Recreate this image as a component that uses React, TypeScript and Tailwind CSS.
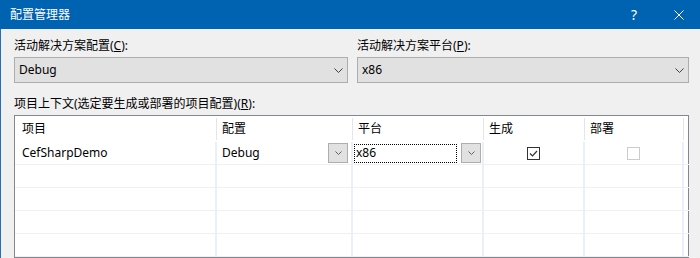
const Chevron = ({ small = false }: { small?: boolean }) =>
  small ? (
    <svg width="7" height="4" viewBox="0 0 7 4" className="block">
      <polyline points="0.5,0.5 3.5,3.5 6.5,0.5" fill="none" stroke="#606060" strokeWidth="1" />
    </svg>
  ) : (
    <svg width="9" height="5" viewBox="0 0 9 5" className="block">
      <polyline points="0.5,0.5 4.5,4.5 8.5,0.5" fill="none" stroke="#404040" strokeWidth="1" />
    </svg>
  );

const Combo = ({ value }: { value: string }) => (
  <div className="h-[26px] flex items-center justify-between bg-[#e1e1e1] border border-[#adadad] pl-[4px] pr-[4px]">
    <span>{value}</span>
    <Chevron />
  </div>
);

const SmallButton = () => (
  <div className="w-[20px] h-[20px] flex items-center justify-center bg-[#e1e1e1] border border-[#adadad]">
    <Chevron small />
  </div>
);

const headers = ["项目", "配置", "平台", "生成", "部署", ""];

const App = () => {
  return (
    <div className="w-[700px] h-[258px] overflow-hidden bg-[#f0f0f0] text-[12px] leading-[16px] text-black font-[family-name:'Noto_Sans','Noto_Sans_CJK_SC',sans-serif] flex flex-col">
      {/* Title bar */}
      <div className="h-[29px] bg-[#0063b1] text-white flex items-center pl-[10px] shrink-0">
        <span className="grow">配置管理器</span>
        <span className="w-[10px] text-[14px] text-center mr-[35px]">?</span>
        <svg width="10" height="10" viewBox="0 0 10 10" className="mr-[16px]">
          <path d="M0.5 0.5 L9.5 9.5 M9.5 0.5 L0.5 9.5" stroke="white" strokeWidth="1" />
        </svg>
      </div>

      {/* Body */}
      <div className="grow border-l border-[#2a6db5] pl-[13px] pr-[11px] pt-[9px]">
        <div className="flex gap-[9px]">
          <div className="w-[334px] flex flex-col gap-[3px]">
            <span>活动解决方案配置(<u>C</u>):</span>
            <Combo value="Debug" />
          </div>
          <div className="grow flex flex-col gap-[3px]">
            <span>活动解决方案平台(<u>P</u>):</span>
            <Combo value="x86" />
          </div>
        </div>

        <div className="mt-[13px]">项目上下文(选定要生成或部署的项目配置)(<u>R</u>):</div>

        <div className="mt-[3px] border border-[#828790] bg-white grid grid-cols-[202px_136px_131px_101px_99px_1fr]">
          {headers.map((h, i) => (
            <div key={i} className="h-[26px] flex items-center py-[2px]">
              <div className={`h-full w-full flex items-center ${i < 5 ? "border-r border-[#e5e5e5]" : ""} ${i === 0 ? "pl-[7px]" : "pl-[5px]"}`}>
                {h}
              </div>
            </div>
          ))}

          {/* data row */}
          <div className="h-[23px] border-b border-r-2 border-b-[#f0f0f0] border-r-[#eaf0f9] flex items-center pl-[7px]">CefSharpDemo</div>
          <div className="h-[23px] border-b border-r-2 border-b-[#f0f0f0] border-r-[#eaf0f9] flex items-center pl-[5px] pr-[3px] justify-between">
            <span>Debug</span>
            <SmallButton />
          </div>
          <div className="h-[23px] border-b border-r-2 border-b-[#f0f0f0] border-r-[#eaf0f9] flex items-center pl-[1px] pr-[1px] gap-[4px]">
            <div className="h-[19px] grow border border-dotted border-black flex items-center pl-[1px]">x86</div>
            <SmallButton />
          </div>
          <div className="h-[23px] border-b border-r-2 border-b-[#f0f0f0] border-r-[#eaf0f9] flex items-center justify-center">
            <svg width="13" height="13" viewBox="0 0 13 13">
              <rect x="0.5" y="0.5" width="12" height="12" fill="white" stroke="#333333" />
              <polyline points="3,6.5 5.5,9 10,4" fill="none" stroke="#333333" strokeWidth="1.2" />
            </svg>
          </div>
          <div className="h-[23px] border-b border-r-2 border-b-[#f0f0f0] border-r-[#eaf0f9] flex items-center justify-center">
            <svg width="13" height="13" viewBox="0 0 13 13">
              <rect x="0.5" y="0.5" width="12" height="12" fill="white" stroke="#cccccc" />
            </svg>
          </div>
          <div className="h-[23px] border-b border-b-[#f0f0f0]" />

          {[0, 1, 2, 3].map((r) =>
            [0, 1, 2, 3, 4, 5].map((c) => (
              <div
                key={`${r}-${c}`}
                className={`h-[23px] border-b border-b-[#f0f0f0] ${c < 5 ? "border-r-2 border-r-[#eaf0f9]" : ""}`}
              />
            ))
          )}
        </div>
      </div>
    </div>
  );
};

export default App;
